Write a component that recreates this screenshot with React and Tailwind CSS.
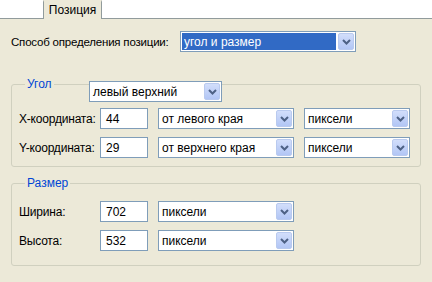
import React from 'react';

function Chevron() {
  return (
    <svg width="9" height="6" viewBox="0 0 9 6">
      <polyline points="1,1 4.5,4.5 8,1" fill="none" stroke="#4D6185" strokeWidth="2" />
    </svg>
  );
}

function Select({ value, width, selected }) {
  return (
    <div
      className={`flex h-[21px] items-stretch border border-[#7F9DB9] bg-white ${width}`}
    >
      <div
        className={`flex flex-1 items-center overflow-hidden whitespace-nowrap ${
          selected ? 'm-px bg-[#316AC5] pl-[2px] text-white' : 'pl-[3px] text-black'
        }`}
      >
        {value}
      </div>
      <div className="m-px flex w-[16px] items-center justify-center rounded-[2px] border border-[#B9CAEF] bg-gradient-to-b from-[#D2DEFB] to-[#B2C6F5]">
        <Chevron />
      </div>
    </div>
  );
}

function Input({ value }) {
  return (
    <div className="flex h-[21px] w-[48px] items-center border border-[#7F9DB9] bg-white pl-[5px]">
      {value}
    </div>
  );
}

function Row({ label, value, selects }) {
  return (
    <div className="flex h-[21px] items-center">
      <div className="w-[81px] whitespace-nowrap tracking-[-0.2px]">{label}</div>
      <Input value={value} />
      <div className="ml-[10px] flex gap-[10px]">
        {selects.map((s, i) => (
          <Select key={i} value={s.value} width={s.width} />
        ))}
      </div>
    </div>
  );
}

export default function App() {
  return (
    <div
      className="h-[282px] w-[432px] overflow-hidden bg-[#ECE9D8] text-[12px] leading-[14px] text-black"
      style={{ fontFamily: '"Liberation Sans", Arial, sans-serif' }}
    >
      {/* tab strip */}
      <div className="flex h-[19px] bg-white">
        <div className="w-[43px] border-b border-[#919B9C]" />
        <div className="flex w-[59px] items-center justify-center border-x border-[#919B9C] border-t-2 border-t-[#ECE9D8] bg-[#ECE9D8] pb-[2px]">
          Позиция
        </div>
        <div className="flex-1 border-b border-[#919B9C]" />
      </div>

      {/* mode */}
      <div className="mt-[12px] flex items-center pl-[11px]">
        <div className="w-[169px] whitespace-nowrap text-[11.5px] tracking-[-0.2px]">Способ определения позиции:</div>
        <Select value="угол и размер" width="w-[176px]" selected />
      </div>

      {/* corner group */}
      <fieldset className="relative ml-[11px] mt-[26px] w-[410px] rounded-[3px] border border-[#D0D0BF] pb-[8px] pl-[7px] pt-[17px]">
        <legend className="ml-[6px] px-[2px] leading-[13px] text-[#0046D5]">Угол</legend>
        <div className="absolute left-[77px] top-[-10px]">
          <Select value="левый верхний" width="w-[133px]" />
        </div>
        <div className="flex flex-col gap-[8px]">
          <Row
            label="X-координата:"
            value="44"
            selects={[
              { value: 'от левого края', width: 'w-[136px]' },
              { value: 'пиксели', width: 'w-[106px]' },
            ]}
          />
          <Row
            label="Y-координата:"
            value="29"
            selects={[
              { value: 'от верхнего края', width: 'w-[136px]' },
              { value: 'пиксели', width: 'w-[106px]' },
            ]}
          />
        </div>
      </fieldset>

      {/* size group */}
      <fieldset className="ml-[11px] mt-[10px] w-[410px] rounded-[3px] border border-[#D0D0BF] pb-[14px] pl-[7px] pt-[11px]">
        <legend className="ml-[6px] px-[2px] leading-[13px] text-[#0046D5]">Размер</legend>
        <div className="flex flex-col gap-[8px]">
          <Row label="Ширина:" value="702" selects={[{ value: 'пиксели', width: 'w-[136px]' }]} />
          <Row label="Высота:" value="532" selects={[{ value: 'пиксели', width: 'w-[136px]' }]} />
        </div>
      </fieldset>
    </div>
  );
}
